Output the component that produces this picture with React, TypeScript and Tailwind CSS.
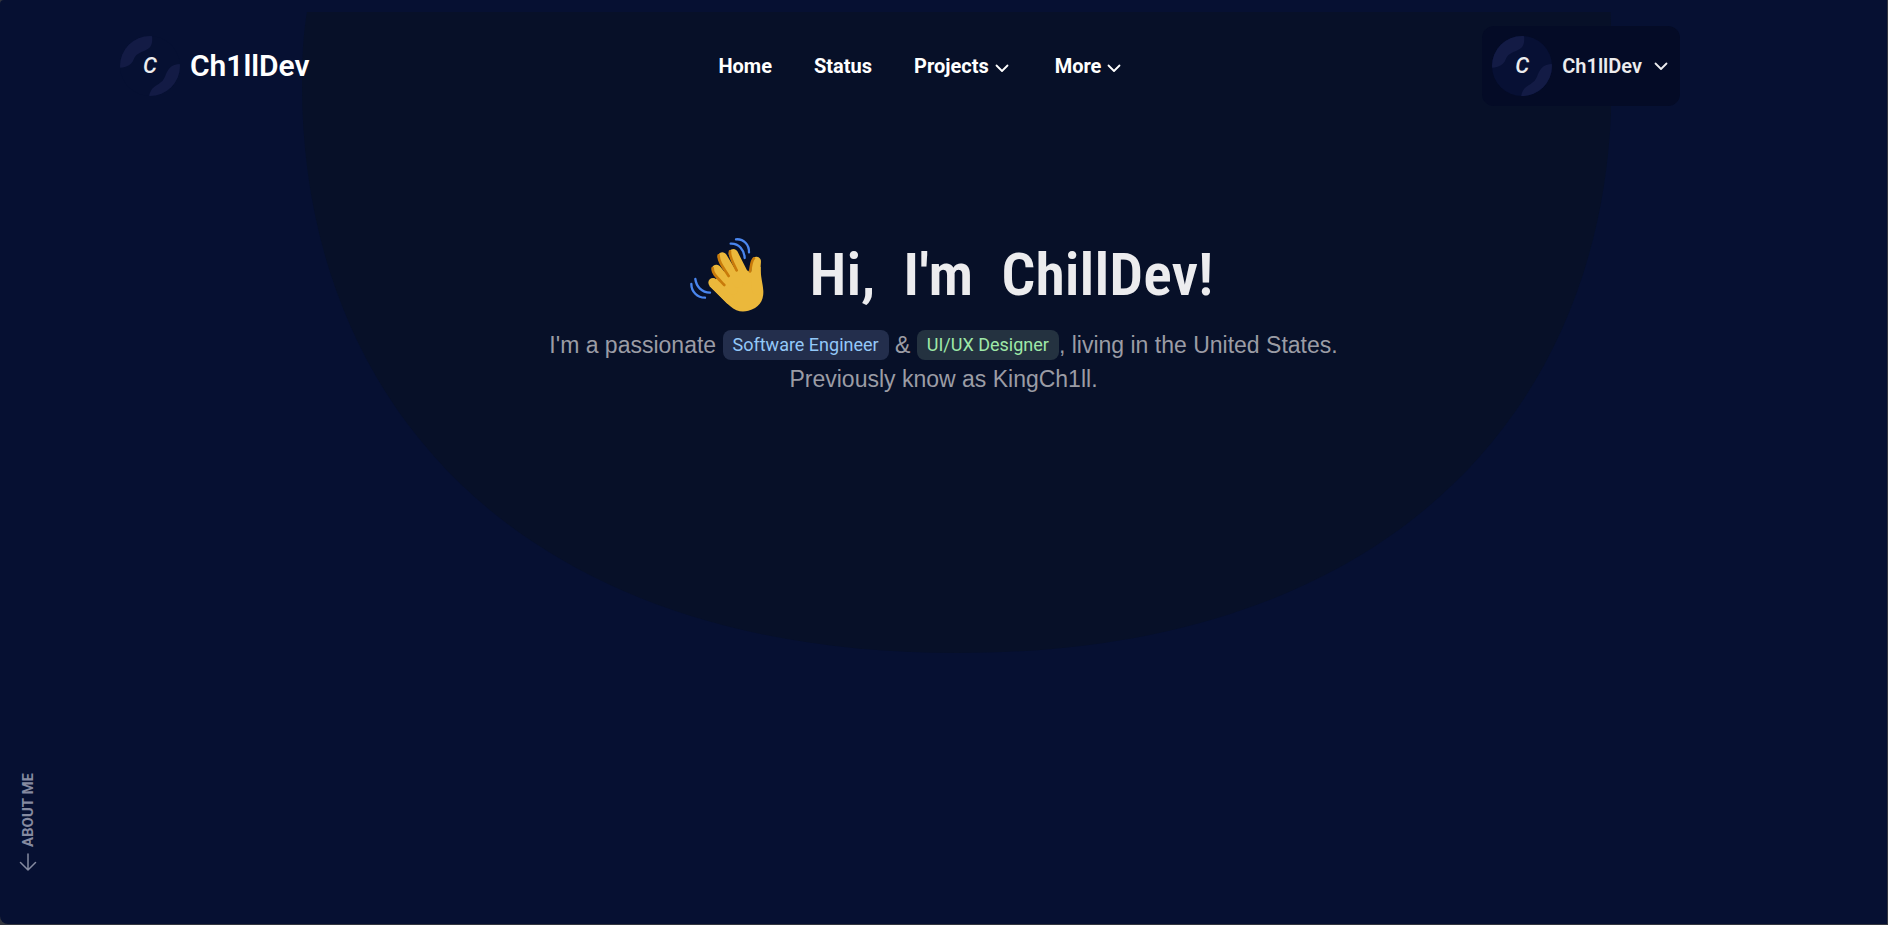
import { useId } from "react";

function Avatar({ base }: { base: string }) {
  const clip = useId();
  return (
    <span className="relative grid size-[60px] shrink-0 place-items-center">
      <svg viewBox="0 0 60 60" className="absolute inset-0 size-full" aria-hidden="true">
        <clipPath id={clip}>
          <circle cx="30" cy="30" r="30" />
        </clipPath>
        <g clipPath={`url(#${clip})`}>
          <rect width="60" height="60" fill={base} />
          <path d="M32 -1C33 9 31 12 24 15C16 18 15 20 13 25C11 29 7 31 -1 32V-1Z" fill="#131b45" />
          <path d="M61 28C53 28 49 31 46 38C44 44 42 46 37 49C32 52 30 55 29 61H61Z" fill="#131b45" />
        </g>
      </svg>
      <span className="relative text-[22px] leading-5 font-medium italic text-[#ececee]">C</span>
    </span>
  );
}

function Chevron({ size }: { size: string }) {
  return (
    <svg viewBox="0 0 14 14" className={size} fill="none" stroke="currentColor" strokeWidth="1.8" strokeLinecap="round" strokeLinejoin="round" aria-hidden="true">
      <path d="M1.500 4.500L7 10L12.500 4.500" />
    </svg>
  );
}

function WavingHand() {
  return (
    <svg viewBox="0 0 270 270" className="size-[90px]" fill="none" strokeLinecap="round" role="img" aria-label="Waving hand">
      <path d="M88 168L150 228C168 245 188 247 205 242C236 234 251 215 250 183C249 160 241 140 242 110L211 126L180 112L130 125Z" fill="#ebb83b" />
      <g stroke="#ebb83b" strokeWidth="28">
        <path d="M99 158L150 210" />
        <path d="M109 118L160 180" />
        <path d="M127 81L175 160" />
        <path d="M160 71L198 146" />
        <path d="M229 94C226 120 227 140 230 180" />
      </g>
      <g stroke="#c87a0a" strokeWidth="8">
        <path d="M98 114C97 130 108 139 133 165" />
        <path d="M116 76C115 92 125 106 146 138" />
        <path d="M150 64C148 80 157 94 170 121" />
        <path d="M222 85C213 93 214 108 210 124" />
      </g>
      <g stroke="#4a86ee" strokeWidth="7">
        <path d="M168 28C191 26 208 44 207 67" />
        <path d="M152 41C177 40 193 60 194 84" />
        <path d="M34 162C34 185 52 203 75 203" />
        <path d="M46 147C49 170 65 187 90 188" />
      </g>
    </svg>
  );
}

export default function App() {
  return (
    <div className="bg-[#33363f] pr-px pb-px font-['Roboto',sans-serif]">
      <div className="relative flex min-h-[calc(100vh-1px)] flex-col rounded-tl-sm rounded-bl-lg bg-[#061032]">
        <svg
          viewBox="303 12 1309 641"
          preserveAspectRatio="none"
          className="absolute top-3 left-[16%] h-[641px] w-[69.4%]"
          aria-hidden="true"
        >
          <path d="M308 12C304 34 303 60 303 85C303 397 513 653 958 653C1403 653 1612 397 1612 85C1612 60 1612 34 1611 12Z" fill="#071028" />
        </svg>

        <header className="relative flex items-center justify-between pt-[26px] pr-[207px] pl-[120px] text-white">
          <a href="#home" className="flex items-center gap-[10px]">
            <Avatar base="#061032" />
            <span className="text-[30px] leading-10 font-semibold">Ch1llDev</span>
          </a>
          <nav className="flex items-center gap-[42px] pl-12 text-xl font-bold">
            <a href="#home">Home</a>
            <a href="#status">Status</a>
            <button type="button" className="flex items-center gap-[6px] pr-1">
              Projects
              <Chevron size="mt-1 size-[14px]" />
            </button>
            <button type="button" className="flex items-center gap-[6px]">
              More
              <Chevron size="mt-1 size-[14px]" />
            </button>
          </nav>
          <button type="button" className="flex items-center gap-3 rounded-xl bg-[#040b26] py-[10px] pr-3 pl-[10px] text-xl font-semibold text-[#ececee]">
            <span className="flex items-center gap-[10px]">
              <Avatar base="#071034" />
              Ch1llDev
            </span>
            <Chevron size="size-[14px]" />
          </button>
        </header>

        <main className="relative flex flex-1 flex-col items-center pt-[124px]">
          <div className="flex items-center gap-10 pl-[6px]">
            <WavingHand />
            <h1 className="flex gap-7 font-['Roboto_Condensed',sans-serif] text-[60px] leading-[90px] font-semibold text-[#ececee]">
              <span>Hi,</span> <span>I'm</span> <span>ChillDev!</span>
            </h1>
          </div>
          <p className="mt-2 text-center font-['Liberation_Sans',sans-serif] text-[23px] leading-[34px] text-[#9b9ca5]">
            I'm a passionate{" "}
            <span className="inline-block rounded-lg bg-[#232e4c] px-[10px] align-[2px] font-['Roboto',sans-serif] text-lg leading-[30px] text-[#93c8f8]">
              Software Engineer
            </span>{" "}
            &amp;{" "}
            <span className="inline-block rounded-lg bg-[#243240] px-[10px] align-[2px] font-['Roboto',sans-serif] text-lg leading-[30px] text-[#9ee8a8]">
              UI/UX Designer
            </span>
            , living in the United States.
            <br />
            Previously know as KingCh1ll.
          </p>
        </main>

        <a href="#about" className="relative mb-[53px] ml-[18px] flex flex-col items-center gap-[6px] self-start text-[15px] font-bold text-[#858aa0]">
          <span className="rotate-180 leading-5 uppercase [writing-mode:vertical-rl]">About me</span>
          <svg viewBox="0 0 18 18" className="size-[18px]" fill="none" stroke="currentColor" strokeWidth="1.5" strokeLinecap="round" strokeLinejoin="round" aria-hidden="true">
            <path d="M9 1V17M1.500 9.500L9 17L16.500 9.500" />
          </svg>
        </a>
      </div>
    </div>
  );
}
